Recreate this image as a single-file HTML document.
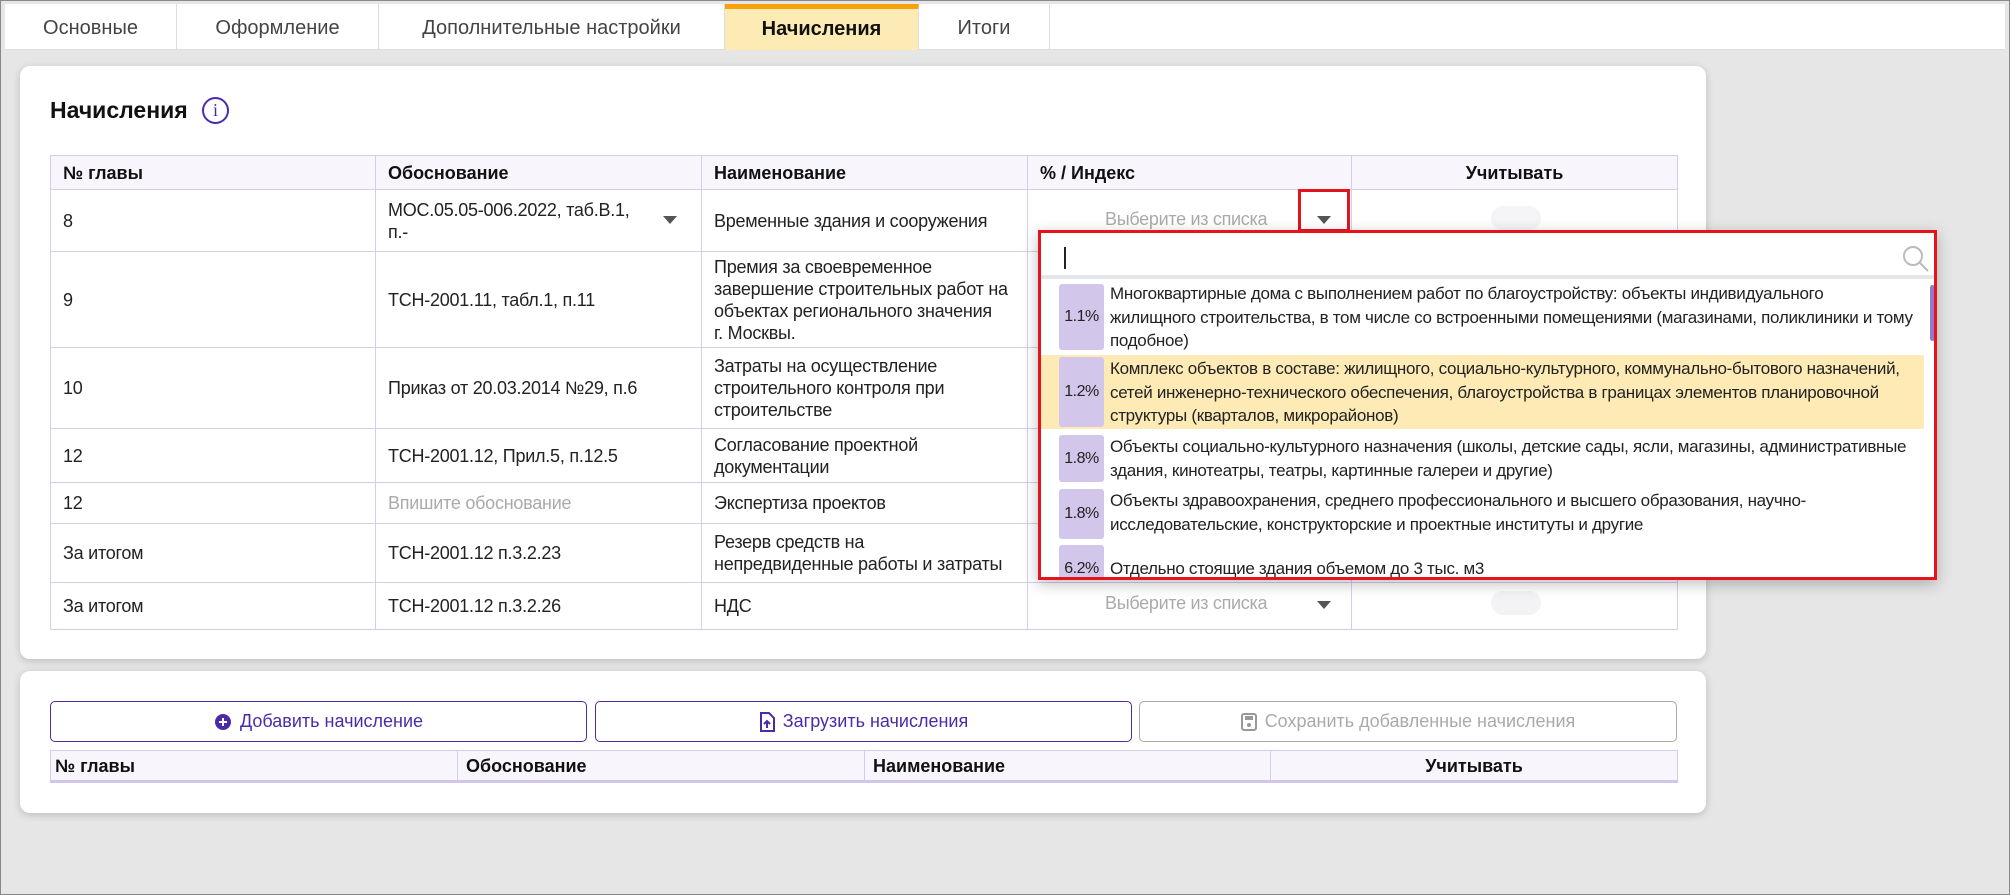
<!DOCTYPE html>
<html><head><meta charset="utf-8"><style>
*{box-sizing:border-box;margin:0;padding:0}
body{width:2010px;height:895px;background:#e6e6e6;font-family:"Liberation Sans","DejaVu Sans",sans-serif;position:relative;overflow:hidden;border:1px solid #888;color:#222}
.abs{position:absolute}
.tabs{left:4px;top:3px;width:2000px;height:46px;background:#fff;border-bottom:1px solid #ddd}
.tab{position:absolute;top:0;height:46px;line-height:48px;text-align:center;font-size:20px;color:#444;border-right:1px solid #ddd}
.card{background:#fff;border-radius:10px;box-shadow:0 2px 8px rgba(0,0,0,.18)}
table{border-collapse:collapse;position:absolute;table-layout:fixed}
td,th{border:1px solid #d8ccec;font-size:18px;padding:0 12px;text-align:left;vertical-align:middle;line-height:22px}
td{letter-spacing:-0.25px}
th{background:#f8f5fd;font-weight:bold;color:#111}
.ph{color:#aaa}
.arr{position:absolute;width:0;height:0;border-left:7px solid transparent;border-right:7px solid transparent;border-top:8px solid #555}
.dd{left:1037px;top:229px;width:899px;height:350px;border:3px solid #e5131c;background:#fff;box-shadow:0 4px 14px rgba(0,0,0,.25);overflow:hidden}
.item{position:absolute;left:0;width:890px;font-size:17px;line-height:23.5px;color:#222;letter-spacing:-0.3px}
.badge{position:absolute;left:18px;top:2px;bottom:2px;width:45px;background:#d2c7ea;border-radius:3px;font-size:16px;display:flex;align-items:center;justify-content:center;letter-spacing:-0.5px}
.txt{position:absolute;left:69px;right:14px;top:0}
.btn{position:absolute;top:700px;height:41px;border:1.5px solid #4b2ca6;border-radius:5px;font-size:18px;color:#4b2ca6;display:flex;align-items:center;justify-content:center;gap:8px}
</style></head><body>
<div class="abs tabs">
<div class="tab" style="left:0;width:172px">Основные</div>
<div class="tab" style="left:172px;width:202px">Оформление</div>
<div class="tab" style="left:374px;width:346px">Дополнительные настройки</div>
<div class="tab" style="left:720px;width:194px;background:#fdebb5;font-weight:bold;color:#111;border-top:5px solid #f7a20c;line-height:40px">Начисления</div>
<div class="tab" style="left:914px;width:131px">Итоги</div>
</div>

<div class="abs card" style="left:19px;top:65px;width:1686px;height:593px"></div>
<div class="abs" style="left:49px;top:96px;font-size:23px;font-weight:bold;color:#111">Начисления</div>
<div class="abs" style="left:201px;top:96px;width:27px;height:27px;border:2px solid #4b2ca6;border-radius:50%;color:#4b2ca6;font-size:18px;text-align:center;line-height:23px;font-family:'Liberation Serif',serif">i</div>

<table style="left:49px;top:154px;width:1627px">
<colgroup><col style="width:325px"><col style="width:326px"><col style="width:326px"><col style="width:324px"><col style="width:326px"></colgroup>
<tr style="height:34px"><th>№ главы</th><th>Обоснование</th><th>Наименование</th><th>% / Индекс</th><th style="text-align:center">Учитывать</th></tr>
<tr style="height:62px"><td>8</td><td>МОС.05.05-006.2022, таб.В.1,<br>п.-</td><td>Временные здания и сооружения</td><td></td><td></td></tr>
<tr style="height:96px"><td>9</td><td>ТСН-2001.11, табл.1, п.11</td><td>Премия за своевременное завершение строительных работ на объектах регионального значения<br>г. Москвы.</td><td></td><td></td></tr>
<tr style="height:81px"><td>10</td><td>Приказ от 20.03.2014 №29, п.6</td><td>Затраты на осуществление строительного контроля при строительстве</td><td></td><td></td></tr>
<tr style="height:54px"><td>12</td><td>ТСН-2001.12, Прил.5, п.12.5</td><td>Согласование проектной документации</td><td></td><td></td></tr>
<tr style="height:41px"><td>12</td><td class="ph">Впишите обоснование</td><td>Экспертиза проектов</td><td></td><td></td></tr>
<tr style="height:59px"><td>За итогом</td><td>ТСН-2001.12 п.3.2.23</td><td>Резерв средств на<br>непредвиденные работы и затраты</td><td></td><td></td></tr>
<tr style="height:47px"><td>За итогом</td><td>ТСН-2001.12 п.3.2.26</td><td>НДС</td><td></td><td></td></tr>
</table>
<div class="arr" style="left:662px;top:215px"></div>
<div class="abs ph" style="left:1104px;top:208px;font-size:18px;letter-spacing:-0.3px">Выберите из списка</div>
<div class="arr" style="left:1316px;top:215px"></div>
<div class="abs" style="left:1490px;top:205px;width:50px;height:24px;border-radius:12px;background:#f5f5f7"></div>
<div class="abs ph" style="left:1104px;top:592px;font-size:18px;letter-spacing:-0.3px">Выберите из списка</div>
<div class="arr" style="left:1316px;top:600px"></div>
<div class="abs" style="left:1490px;top:590px;width:50px;height:24px;border-radius:12px;background:#f3f3f6"></div>
<div class="abs" style="left:1297px;top:188px;width:52px;height:43px;border:3px solid #e5131c"></div>

<div class="abs dd">
<div class="abs" style="left:0;top:3px;width:893px;height:43px;border-bottom:4px solid #e4e6ea"></div>
<div class="abs" style="left:23px;top:14px;width:2px;height:22px;background:#222"></div>
<svg class="abs" style="left:861px;top:12px" width="28" height="28" viewBox="0 0 28 28"><circle cx="11" cy="11" r="9" fill="none" stroke="#bbb" stroke-width="2"/><line x1="17.5" y1="17.5" x2="26" y2="26" stroke="#bbb" stroke-width="2"/></svg>
<div class="item" style="top:49px;height:70px"><div class="badge">1.1%</div><div class="txt">Многоквартирные дома с выполнением работ по благоустройству: объекты индивидуального<br>жилищного строительства, в том числе со встроенными помещениями (магазинами, поликлиники и тому подобное)</div></div>
<div class="item" style="top:122px;height:74px;background:#fdeab5;width:883px"><div class="badge">1.2%</div><div class="txt" style="top:2px;right:2px">Комплекс объектов в составе: жилищного, социально-культурного, коммунально-бытового назначений, сетей инженерно-технического обеспечения, благоустройства в границах элементов планировочной структуры (кварталов, микрорайонов)</div></div>
<div class="item" style="top:200px;height:51px"><div class="badge">1.8%</div><div class="txt" style="top:2px;right:4px">Объекты социально-культурного назначения (школы, детские сады, ясли, магазины, административные здания, кинотеатры, театры, картинные галереи и другие)</div></div>
<div class="item" style="top:254px;height:54px"><div class="badge">1.8%</div><div class="txt" style="top:2px">Объекты здравоохранения, среднего профессионального и высшего образования, научно-исследовательские, конструкторские и проектные институты и другие</div></div>
<div class="item" style="top:310px;height:44px"><div class="badge" style="bottom:-6px">6.2%</div><div class="txt" style="top:14px">Отдельно стоящие здания объемом до 3 тыс. м3</div></div>
<div class="abs" style="left:889px;top:52px;width:5px;height:56px;background:#8f7ad0;border-radius:3px"></div>
</div>

<div class="abs card" style="left:19px;top:670px;width:1686px;height:142px"></div>
<div class="btn" style="left:49px;width:537px"><svg width="18" height="18"><circle cx="9" cy="9" r="8" fill="#4b2ca6"/><path d="M9 5v8M5 9h8" stroke="#fff" stroke-width="2"/></svg>Добавить начисление</div>
<div class="btn" style="left:594px;width:537px"><svg width="16" height="20"><path d="M2 1h8l5 5v13H2z" fill="none" stroke="#4b2ca6" stroke-width="2"/><path d="M8 16V9M5 12l3-3 3 3" stroke="#4b2ca6" stroke-width="2" fill="none"/></svg>Загрузить начисления</div>
<div class="btn" style="left:1138px;width:538px;border-color:#aaa;color:#aaa"><svg width="16" height="18"><rect x="1" y="1" width="14" height="16" rx="2" fill="none" stroke="#999" stroke-width="2"/><rect x="4" y="3" width="8" height="4" fill="#999"/><circle cx="8" cy="12" r="2" fill="#999"/></svg>Сохранить добавленные начисления</div>
<table style="left:49px;top:749px;width:1627px;border-bottom:3px solid #d3c5ea">
<colgroup><col style="width:407px"><col style="width:407px"><col style="width:406px"><col style="width:407px"></colgroup>
<tr style="height:31px"><th style="padding-left:4px">№ главы</th><th style="padding-left:8px">Обоснование</th><th style="padding-left:8px">Наименование</th><th style="text-align:center">Учитывать</th></tr>
</table>
</body></html>
